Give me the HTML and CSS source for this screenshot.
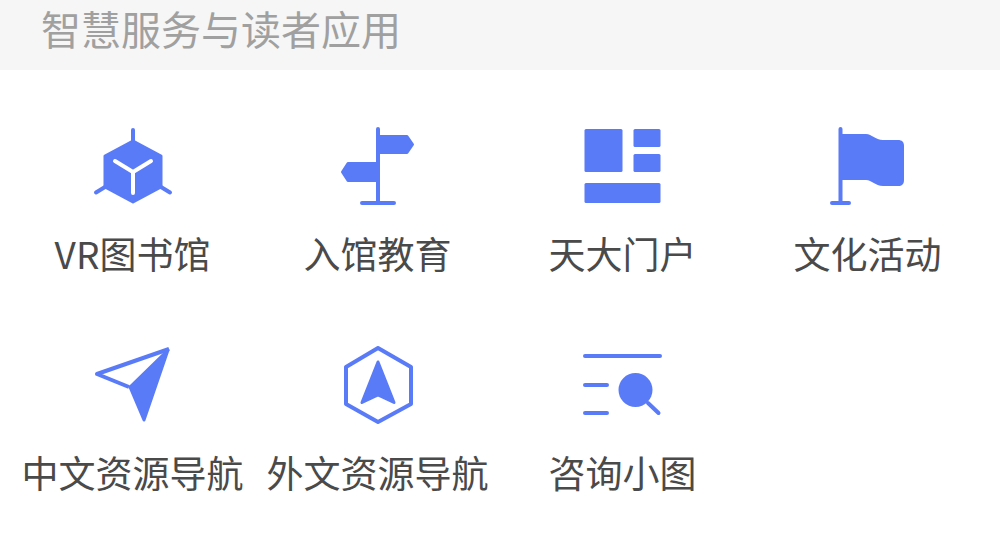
FILE: index.html
```html
<!DOCTYPE html>
<html lang="zh-CN">
<head>
<meta charset="UTF-8">
<title>智慧服务与读者应用</title>
<link rel="stylesheet" href="styles.css">
</head>
<body>
  <div class="section-title">智慧服务与读者应用</div>

  <div class="app-grid">
    <div class="app-item">
      <svg class="app-icon" viewBox="0 0 80 80">
        <path class="line" d="M40 3V15M12 60L3 65.500M68 60L77 65.500"/>
        <path class="fill" d="M40 14L68 29V60L40 75L12 60V29Z"/>
        <path class="cut" d="M22 34L40 45L58 34M40 45V66"/>
      </svg>
      <div class="app-name">VR图书馆</div>
    </div>
    <div class="app-item">
      <svg class="app-icon" viewBox="0 0 80 80">
        <path class="line" d="M40 2V76M24 76H56"/>
        <path class="fill" d="M40 9.500H69L74.500 17.500L69 25.500H40Z"/>
        <path class="fill" d="M40 36.500H10L4.500 45L10 53.500H40Z"/>
      </svg>
      <div class="app-name">入馆教育</div>
    </div>
    <div class="app-item">
      <svg class="app-icon" viewBox="0 0 80 80">
        <rect class="block" x="1.500" y="2" width="38" height="43" rx="1.500"/>
        <rect class="block" x="50.500" y="2" width="27" height="18" rx="1.500"/>
        <rect class="block" x="50.500" y="27" width="27" height="18" rx="1.500"/>
        <rect class="block" x="1.500" y="56" width="76" height="20" rx="1.500"/>
      </svg>
      <div class="app-name">天大门户</div>
    </div>
    <div class="app-item">
      <svg class="app-icon" viewBox="0 0 80 80">
        <path class="line" d="M12.500 2V76M4 76H21"/>
        <path class="block" d="M12.500 7H38C44 7 47 13 55 13H70C74 13 76 15 76 19V53C76 57 74 59 70 59H55C47 59 44 53 38 53H12.500Z"/>
      </svg>
      <div class="app-name">文化活动</div>
    </div>
    <div class="app-item">
      <svg class="app-icon" viewBox="0 0 80 80">
        <path class="outline" d="M76 3L4 28L36 41"/>
        <path class="fill" d="M75 4L37 41L51 74Z"/>
      </svg>
      <div class="app-name">中文资源导航</div>
    </div>
    <div class="app-item">
      <svg class="app-icon" viewBox="0 0 80 80">
        <path class="outline" d="M40 2L73 21V58L40 76L8 58V21Z"/>
        <path class="fill" d="M40 16L56 56.500L40 49L24 56.500Z"/>
      </svg>
      <div class="app-name">外文资源导航</div>
    </div>
    <div class="app-item">
      <svg class="app-icon" viewBox="0 0 80 80">
        <path class="line" d="M2 10H77M2 39H24M2 67H24M65 57L75.500 67"/>
        <circle class="block" cx="52.500" cy="44" r="17"/>
      </svg>
      <div class="app-name">咨询小图</div>
    </div>
  </div>
</body>
</html>
```

FILE: styles.css
```css
body {
  margin: 0;
  background: #ffffff;
  font-family: "Noto Sans CJK SC", "Noto Sans", sans-serif;
}

.section-title {
  height: 70px;
  padding-left: 41px;
  background: #f6f6f6;
  color: #a0a0a0;
  font-size: 40px;
  line-height: 56px;
}

.app-grid {
  display: grid;
  grid-template-columns: repeat(4, 1fr);
  grid-auto-rows: 170px;
  row-gap: 49px;
  padding: 57px 10px 0;
}

.app-item {
  display: flex;
  flex-direction: column;
  align-items: center;
}

.app-icon {
  display: block;
  width: 80px;
  height: 80px;
}

.app-name {
  margin-top: 24px;
  color: #4a4a4a;
  font-size: 37px;
  line-height: 44px;
  white-space: nowrap;
}

.app-icon .line {
  fill: none;
  stroke: #5a7bf7;
  stroke-width: 4;
  stroke-linecap: round;
}

.app-icon .fill {
  fill: #5a7bf7;
  stroke: #5a7bf7;
  stroke-width: 3;
  stroke-linejoin: round;
}

.app-icon .block {
  fill: #5a7bf7;
}

.app-icon .cut {
  fill: none;
  stroke: #ffffff;
  stroke-width: 4;
  stroke-linecap: round;
  stroke-linejoin: round;
}

.app-icon .outline {
  fill: none;
  stroke: #5a7bf7;
  stroke-width: 4;
  stroke-linejoin: round;
}
```
